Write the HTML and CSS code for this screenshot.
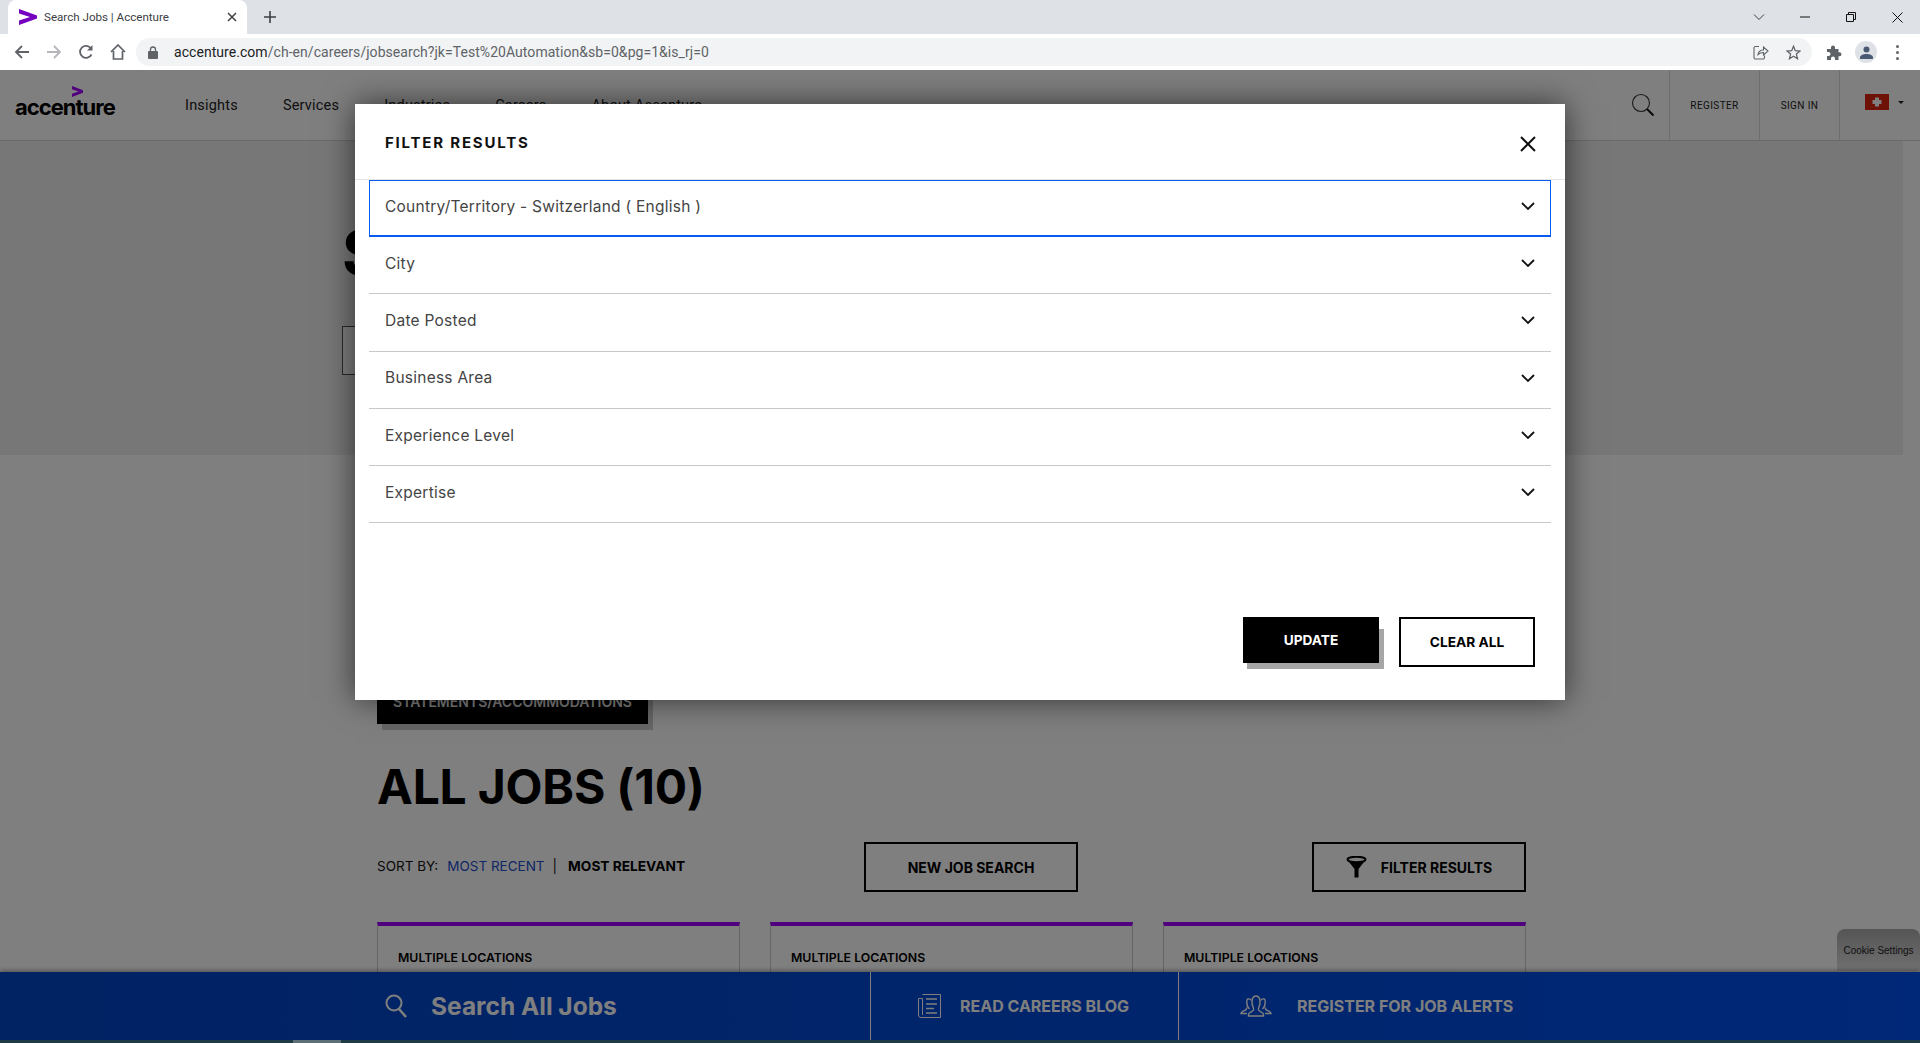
FILE: index.html
```html
<!DOCTYPE html>
<html lang="en">
<head>
    <meta charset="UTF-8">
    <title>Search Jobs | Accenture</title>
    <link rel="stylesheet" href="styles.css">
</head>
<body>
    <div class="tabstrip">
        <div class="tab">
            <svg class="favicon" width="18" height="16" viewBox="0 0 18 16"><path d="M0 0 18 6.500V9.500L0 16V11.500L11 8 0 4.500Z" fill="#7500c0"/></svg>
            <span class="tab-title">Search Jobs | Accenture</span>
            <svg class="tab-close" width="10" height="10" viewBox="0 0 10 10"><path d="M1 1 9 9M9 1 1 9" stroke="#3c4043" stroke-width="1.500"/></svg>
        </div>
        <svg class="new-tab" width="12" height="12" viewBox="0 0 12 12"><path d="M6 0V12M0 6H12" stroke="#3c4043" stroke-width="1.600"/></svg>
        <div class="window-btns">
            <svg width="12" height="8" viewBox="0 0 12 8"><path d="M1 1.500 6 6.500 11 1.500" fill="none" stroke="#3c4043"/></svg>
            <svg width="10" height="2" viewBox="0 0 10 2"><path d="M0 1H10" stroke="#111"/></svg>
            <svg width="10" height="10" viewBox="0 0 10 10"><path d="M.5 2.500H7.500V9.500H.5ZM2.500 2.500V.5H9.500V7.500H7.500" fill="none" stroke="#111"/></svg>
            <svg width="11" height="11" viewBox="0 0 11 11"><path d="M.5 .5 10.500 10.500M10.500 .5 .5 10.500" stroke="#111"/></svg>
        </div>
    </div>

    <div class="toolbar">
        <svg class="tool-icon" width="16" height="16" viewBox="0 0 16 16"><path d="M15 8H2M8 2 2 8 8 14" fill="none" stroke="#5f6368" stroke-width="1.800"/></svg>
        <svg class="tool-icon" width="16" height="16" viewBox="0 0 16 16"><path d="M1 8H14M8 2 14 8 8 14" fill="none" stroke="#b4b6b9" stroke-width="1.800"/></svg>
        <svg class="tool-icon" width="16" height="16" viewBox="0 0 16 16"><path d="M13.500 10.500A6 6 0 1 1 13 4.500" fill="none" stroke="#5f6368" stroke-width="1.800"/><path d="M14.500 1V6.500H9Z" fill="#5f6368"/></svg>
        <svg class="tool-icon" width="16" height="16" viewBox="0 0 16 16"><path d="M1 8 8 1 15 8M3.500 7V15H12.500V7" fill="none" stroke="#5f6368" stroke-width="1.700"/></svg>
        <div class="address">
            <svg width="10" height="13" viewBox="0 0 10 13"><path d="M2.500 5V3.500A2.500 2.500 0 0 1 7.500 3.500V5" fill="none" stroke="#5f6368" stroke-width="1.300"/><rect y="5" width="10" height="8" rx="1" fill="#5f6368"/></svg>
            <span class="url"><b>accenture.com</b>/ch-en/careers/jobsearch?jk=Test%20Automation&amp;sb=0&amp;pg=1&amp;is_rj=0</span>
            <svg class="addr-share" width="16" height="15" viewBox="0 0 16 15"><path d="M6 1.500H2.500A1.500 1.500 0 0 0 1 3V12.500A1.500 1.500 0 0 0 2.500 14H10A1.500 1.500 0 0 0 11.500 12.500V10.500M5 9.500C5.500 6.500 8 5 10.500 5V2L15 6 10.500 10V7.500C8.500 7.500 6.500 8 5 9.500Z" fill="none" stroke="#5f6368" stroke-width="1.100"/></svg>
            <svg class="addr-star" width="15" height="15" viewBox="0 0 15 15"><path d="M7.500 1.300 9.300 5.700 14 6.100 10.400 9.100 11.500 13.700 7.500 11.300 3.500 13.700 4.600 9.100 1 6.100 5.700 5.700Z" fill="none" stroke="#5f6368" stroke-width="1.300"/></svg>
        </div>
        <svg class="puzzle" width="16" height="15" viewBox="0 0 16 15"><path d="M1 4H5V2.500A2 2 0 0 1 9 2.500V4H12.500V7.300H13.500A2 2 0 0 1 13.500 11.300H12.500V15H9V13.500A2 2 0 0 0 5 13.500V15H1V11H2.500A2 2 0 0 0 2.500 7H1Z" fill="#5f6368"/></svg>
        <div class="avatar">
            <svg width="13" height="13" viewBox="0 0 13 13"><circle cx="6.500" cy="3.500" r="3" fill="#4b5a73"/><path d="M0 13V11.500C0 9.500 3 8 6.500 8S13 9.500 13 11.500V13Z" fill="#4b5a73"/></svg>
        </div>
        <div class="dots"><i></i><i></i><i></i></div>
    </div>

    <div class="page">
        <header class="site-header">
            <div class="logo">
                <svg class="logo-mark" width="11" height="11" viewBox="0 0 11 11"><path d="M0 0 11 4.300V6.700L0 11V7.800L6.500 5.500 0 3.200Z" fill="#a100ff"/></svg>
                <span class="logo-text">accenture</span>
            </div>
            <nav class="main-nav">
                <a>Insights</a>
                <a>Services</a>
                <a>Industries</a>
                <a>Careers</a>
                <a>About Accenture</a>
            </nav>
            <div class="header-right">
                <svg class="header-search" width="24" height="24" viewBox="0 0 24 24"><circle cx="10" cy="10" r="8.500" fill="none" stroke="#333" stroke-width="1.100"/><path d="M16 16 22.500 22.500" stroke="#111" stroke-width="2"/></svg>
                <a class="head-link register">REGISTER</a>
                <a class="head-link signin">SIGN IN</a>
                <div class="flag-cell">
                    <svg width="24" height="16" viewBox="0 0 24 16"><rect width="24" height="16" fill="#dd2411"/><path d="M10 3.500H14V6H16.500V10H14V12.500H10V10H7.500V6H10Z" fill="#fff"/></svg>
                    <span class="caret"></span>
                </div>
            </div>
        </header>

        <section class="hero">
            <h2 class="hero-title">S</h2>
            <div class="hero-input"></div>
        </section>

        <main class="jobs">
            <a class="btn-statements">STATEMENTS/ACCOMMODATIONS</a>
            <h1 class="jobs-title">ALL JOBS (10)</h1>
            <div class="sort-row">
                <div class="sort">
                    <span>SORT BY:</span>
                    <a class="sort-link">MOST RECENT</a>
                    <span class="sort-sep">|</span>
                    <strong>MOST RELEVANT</strong>
                </div>
                <a class="btn-outline btn-new">NEW JOB SEARCH</a>
                <a class="btn-outline btn-filter">
                    <svg width="21" height="22" viewBox="0 0 21 22"><ellipse cx="10.500" cy="3.500" rx="9" ry="2.700" fill="none" stroke="#000" stroke-width="2"/><path d="M1.500 4 8.500 13V21.500H12.500V13L19.500 4C15 7 6 7 1.500 4Z" fill="#000"/></svg>
                    FILTER RESULTS
                </a>
            </div>
            <div class="cards">
                <div class="card">MULTIPLE LOCATIONS</div>
                <div class="card">MULTIPLE LOCATIONS</div>
                <div class="card">MULTIPLE LOCATIONS</div>
            </div>
        </main>

        <a class="cookie-btn">Cookie Settings</a>

        <div class="bottom-bar">
            <div class="bar-item bar-search">
                <svg width="22" height="24" viewBox="0 0 22 24"><circle cx="9" cy="9" r="7.500" fill="none" stroke="#fff" stroke-width="2"/><path d="M14 15 21 23" stroke="#fff" stroke-width="2.500"/></svg>
                <span>Search All Jobs</span>
            </div>
            <div class="bar-item bar-blog">
                <svg width="23" height="24" viewBox="0 0 23 24" fill="none" stroke="#fff"><path d="M4.500 .5H22.500V23.500H3A2.500 2.500 0 0 1 .5 21V4.500H4.500V21"/><path d="M8 5H19M8 10H19M8 14.500H16M8 19H19" stroke-width="1.500"/></svg>
                <span>READ CAREERS BLOG</span>
            </div>
            <div class="bar-item bar-alerts">
                <svg width="32" height="22" viewBox="0 0 32 22" fill="none" stroke="#fff" stroke-width="1.400">
                    <path d="M13.500 13C11 9 11.500 1 16 1S21 9 18.500 13V15C18.500 16.500 23.500 17 23.500 19.500V21H8.500V19.500C8.500 17 13.500 16.500 13.500 15Z"/>
                    <path d="M9.500 14C6.500 12 6 4.500 8 4A3.500 4 0 0 1 11.500 5.500"/>
                    <path d="M22.500 14C25.500 12 26 4.500 24 4A3.500 4 0 0 0 20.500 5.500"/>
                    <path d="M6.500 12.500V14C6.500 15.500 1 16 1 18.500H7"/>
                    <path d="M25.500 12.500V14C25.500 15.500 31 16 31 18.500H25"/>
                </svg>
                <span>REGISTER FOR JOB ALERTS</span>
            </div>
        </div>
        <div class="bottom-strip"><i></i></div>

        <div class="overlay"></div>

        <div class="modal">
            <div class="modal-head">
                <span class="modal-title">FILTER RESULTS</span>
                <svg class="modal-close" width="16" height="16" viewBox="0 0 16 16"><path d="M1 1 15 15M15 1 1 15" stroke="#111" stroke-width="2"/></svg>
            </div>
            <div class="filters">
                <div class="filter filter-open">
                    <span>Country/Territory - Switzerland ( English )</span>
                    <svg width="14" height="8" viewBox="0 0 14 8"><path d="M1 1 7 7 13 1" fill="none" stroke="#111" stroke-width="1.800"/></svg>
                </div>
                <div class="filter">
                    <span>City</span>
                    <svg width="14" height="8" viewBox="0 0 14 8"><path d="M1 1 7 7 13 1" fill="none" stroke="#111" stroke-width="1.800"/></svg>
                </div>
                <div class="filter">
                    <span>Date Posted</span>
                    <svg width="14" height="8" viewBox="0 0 14 8"><path d="M1 1 7 7 13 1" fill="none" stroke="#111" stroke-width="1.800"/></svg>
                </div>
                <div class="filter">
                    <span>Business Area</span>
                    <svg width="14" height="8" viewBox="0 0 14 8"><path d="M1 1 7 7 13 1" fill="none" stroke="#111" stroke-width="1.800"/></svg>
                </div>
                <div class="filter">
                    <span>Experience Level</span>
                    <svg width="14" height="8" viewBox="0 0 14 8"><path d="M1 1 7 7 13 1" fill="none" stroke="#111" stroke-width="1.800"/></svg>
                </div>
                <div class="filter">
                    <span>Expertise</span>
                    <svg width="14" height="8" viewBox="0 0 14 8"><path d="M1 1 7 7 13 1" fill="none" stroke="#111" stroke-width="1.800"/></svg>
                </div>
            </div>
            <div class="modal-foot">
                <button class="btn-update">UPDATE</button>
                <button class="btn-clear">CLEAR ALL</button>
            </div>
        </div>
    </div>
</body>
</html>
```

FILE: styles.css
```css
html, body {
    height: 100%;
}

body {
    margin: 0;
    display: flex;
    flex-direction: column;
    overflow: hidden;
    font-family: 'Inter', 'Liberation Sans', sans-serif;
    color: #000;
    background: #fff;
}

/* browser chrome */
.tabstrip {
    height: 34px;
    flex: none;
    display: flex;
    align-items: center;
    background: #dee1e6;
    padding-left: 8px;
}

.tab {
    width: 239px;
    height: 34px;
    box-sizing: border-box;
    padding: 0 10px 0 11px;
    display: flex;
    align-items: center;
    background: #fff;
    border-radius: 8px 8px 0 0;
}

.favicon {
    margin-right: 7px;
}

.tab-title {
    flex: 1;
    font-family: 'Roboto', sans-serif;
    font-size: 11.600px;
    color: #3c4043;
}

.new-tab {
    margin-left: 17px;
}

.window-btns {
    margin-left: auto;
    width: 184px;
    display: grid;
    grid-template-columns: repeat(4, 46px);
    justify-items: center;
    align-items: center;
}

.toolbar {
    height: 36px;
    flex: none;
    display: flex;
    align-items: center;
    background: #fff;
    padding-left: 14px;
}

.tool-icon {
    margin-right: 16px;
}

.address {
    width: 1676px;
    height: 28px;
    margin-left: -6px;
    box-sizing: border-box;
    padding-left: 12px;
    display: flex;
    align-items: center;
    background: #f1f3f4;
    border-radius: 14px;
}

.url {
    flex: 1;
    margin-left: 16px;
    font-family: 'Roboto', sans-serif;
    font-size: 14px;
    letter-spacing: 0.05px;
    color: #5f6368;
}

.url b {
    font-weight: 400;
    color: #202124;
}

.addr-share {
    margin-right: 17px;
}

.addr-star {
    margin-right: 11px;
}

.puzzle {
    margin-left: 14px;
}

.avatar {
    width: 22px;
    height: 22px;
    margin-left: 13px;
    display: flex;
    align-items: center;
    justify-content: center;
    background: #dee1e6;
    border-radius: 50%;
}

.dots {
    margin-left: 19px;
    display: flex;
    flex-direction: column;
    gap: 3px;
}

.dots i {
    width: 3px;
    height: 3px;
    background: #5f6368;
    border-radius: 50%;
}

/* page under the overlay */
.page {
    flex: 1;
    position: relative;
    overflow: hidden;
    background: #fff;
}

.site-header {
    height: 71px;
    box-sizing: border-box;
    display: flex;
    border-bottom: 1px solid #d5d5d5;
}

.logo {
    width: 185px;
    box-sizing: border-box;
    padding: 16px 0 0 15px;
}

.logo-mark {
    display: block;
    margin-left: 57px;
}

.logo-text {
    display: block;
    margin-top: -3px;
    font-size: 22px;
    font-weight: 700;
    line-height: 26px;
    letter-spacing: -1px;
    color: #000;
}

.main-nav {
    display: flex;
    align-items: center;
    gap: 45px;
    font-family: 'Roboto', sans-serif;
    font-size: 14.500px;
    letter-spacing: 0.2px;
    color: #222;
}

.header-right {
    margin-left: auto;
    display: flex;
    align-items: center;
    height: 70px;
}

.header-search {
    margin-right: 14px;
}

.head-link {
    height: 100%;
    box-sizing: border-box;
    display: flex;
    align-items: center;
    justify-content: center;
    border-left: 1px solid #dcdcdc;
    font-family: 'Roboto', sans-serif;
    font-size: 10px;
    letter-spacing: 0.4px;
    color: #222;
}

.register {
    width: 90px;
}

.signin {
    width: 80px;
}

.flag-cell {
    width: 81px;
    height: 100%;
    box-sizing: border-box;
    padding-left: 25px;
    display: flex;
    align-items: center;
    border-left: 1px solid #dcdcdc;
}

.flag-cell svg {
    margin-top: -6px;
}

.caret {
    margin: -2px 0 0 9px;
    border: 3px solid transparent;
    border-top: 3px solid #222;
}

.hero {
    width: 1903px;
    height: 314px;
    box-sizing: border-box;
    padding: 74px 0 0 342px;
    background: #eee;
}

.hero-title {
    margin: 0;
    font-size: 62px;
    font-weight: 700;
    line-height: 75px;
    text-transform: uppercase;
}

.hero-input {
    width: 800px;
    height: 49px;
    margin-top: 36px;
    box-sizing: border-box;
    border: 1px solid #555;
    background: #fff;
}

.jobs {
    padding: 223px 0 0 377px;
}

.btn-statements {
    display: flex;
    align-items: center;
    justify-content: center;
    width: 271px;
    height: 46px;
    position: relative;
    background: #000;
    color: #fff;
    font-size: 14px;
    font-weight: 600;
    box-shadow: 5px 6px 0 #ccc;
}

.jobs-title {
    margin: 34px 0 0;
    font-size: 48px;
    font-weight: 700;
    line-height: 58px;
    letter-spacing: -0.2px;
}

.sort-row {
    width: 1149px;
    height: 50px;
    margin-top: 26px;
    display: flex;
    align-items: center;
}

.sort {
    width: 487px;
    margin-top: -2px;
    display: flex;
    align-items: center;
    font-size: 13.500px;
    color: #111;
}

.sort-link {
    margin-left: 9px;
    color: #224dc9;
}

.sort-sep {
    margin: 0 11px 0 8px;
}

.sort strong {
    font-size: 13.700px;
    font-weight: 700;
    color: #000;
}

.btn-outline {
    height: 50px;
    box-sizing: border-box;
    display: flex;
    align-items: center;
    justify-content: center;
    gap: 14px;
    border: 2px solid #000;
    font-size: 14px;
    font-weight: 700;
}

.btn-new {
    width: 214px;
}

.btn-filter {
    width: 214px;
    margin-left: auto;
}

.cards {
    width: 1149px;
    margin-top: 30px;
    display: grid;
    grid-template-columns: repeat(3, 363px);
    gap: 30px;
}

.card {
    height: 160px;
    box-sizing: border-box;
    padding: 24px 20px;
    border: 1px solid #ccc;
    border-top: 4px solid #a100ff;
    font-size: 12.300px;
    font-weight: 600;
    line-height: 16px;
}

.cookie-btn {
    position: absolute;
    right: 0;
    bottom: 72px;
    width: 83px;
    height: 42px;
    display: flex;
    align-items: center;
    justify-content: center;
    background: linear-gradient(#aaa, #e0e0e0);
    border-radius: 8px 8px 0 0;
    font-family: 'Liberation Sans', sans-serif;
    font-size: 10px;
    color: #222;
}

.bottom-bar {
    position: absolute;
    left: 0;
    right: 0;
    bottom: 3px;
    height: 68px;
    display: flex;
    background: linear-gradient(90deg, #0246c8, #024ad6 50%, #0050f0);
    box-shadow: 0 -2px 4px rgba(0, 0, 0, 0.3);
    color: #fff;
    font-weight: 700;
}

.bottom-strip {
    position: absolute;
    left: 0;
    right: 0;
    bottom: 0;
    height: 3px;
    padding-left: 293px;
    background: #3e768c;
}

.bottom-strip i {
    display: block;
    width: 48px;
    height: 3px;
    background: #bbe0f0;
}

.bar-item {
    height: 100%;
    box-sizing: border-box;
    display: flex;
    align-items: center;
    font-size: 16px;
}

.bar-search {
    width: 871px;
    padding-left: 385px;
    gap: 24px;
    font-size: 24.500px;
    border-right: 1px solid #fff;
}

.bar-blog {
    width: 308px;
    padding-left: 47px;
    gap: 19px;
    border-right: 1px solid #fff;
}

.bar-alerts {
    padding-left: 61px;
    gap: 25px;
}

.overlay {
    position: absolute;
    top: 0;
    right: 0;
    bottom: 0;
    left: 0;
    background: rgba(0, 0, 0, 0.5);
}

/* filter dialog */
.modal {
    position: absolute;
    z-index: 1;
    top: 34px;
    left: 355px;
    width: 1210px;
    height: 596px;
    display: flex;
    flex-direction: column;
    background: #fff;
    box-shadow: 0 0 30px rgba(0, 0, 0, 0.6);
}

.modal-head {
    height: 76px;
    flex: none;
    box-sizing: border-box;
    padding: 0 29px 0 30px;
    display: flex;
    align-items: center;
    justify-content: space-between;
    border-bottom: 1px solid #e5e5e5;
}

.modal-title {
    margin-top: 1px;
    font-size: 15px;
    font-weight: 700;
    letter-spacing: 1.800px;
    color: #111;
}

.modal-close {
    margin-top: 5px;
}

.filters {
    padding: 0 14px;
}

.filter {
    height: 57.300px;
    box-sizing: border-box;
    padding: 0 16px 4px 16px;
    display: flex;
    align-items: center;
    justify-content: space-between;
    border-bottom: 1px solid #c8c8c8;
    font-size: 15.500px;
    letter-spacing: 0.25px;
    color: #444;
}

.filter-open {
    height: 57px;
    padding: 0 15px 4px 15px;
    border: 1px solid #0a5cf0;
    border-bottom-width: 2px;
}

.modal-foot {
    margin-top: auto;
    padding: 0 30px 33px 0;
    display: flex;
    justify-content: flex-end;
    align-items: flex-start;
    gap: 20px;
}

.modal-foot button {
    width: 136px;
    padding: 0;
    font-family: inherit;
    font-size: 13.700px;
    font-weight: 700;
    cursor: pointer;
}

.btn-update {
    height: 46px;
    position: relative;
    border: none;
    background: #000;
    color: #fff;
}

.btn-update::after {
    content: "";
    position: absolute;
    top: 12px;
    right: -5px;
    bottom: -6px;
    left: 4px;
    z-index: -1;
    background: #a6a6a6;
}

.btn-clear {
    height: 50px;
    border: 2px solid #000;
    background: #fff;
    color: #000;
}
```
